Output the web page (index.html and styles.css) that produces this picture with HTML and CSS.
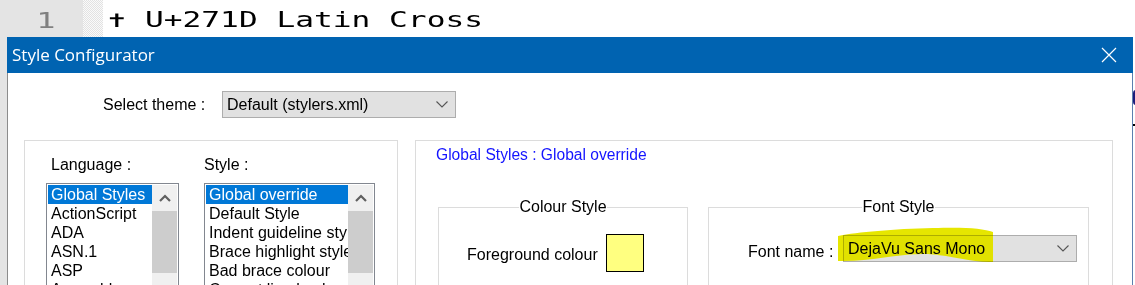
FILE: index.html
```html
<!DOCTYPE html>
<html lang="en">
<head>
<meta charset="utf-8">
<title>Style Configurator</title>
<link rel="stylesheet" href="styles.css">
</head>
<body>
<div class="editor">
  <div class="gutter"><span class="ln">1</span></div>
  <div class="fold"></div>
  <div class="code-col">
    <div class="code"><span class="code-text">✝ U+271D Latin Cross</span></div>
    <div class="behind-glyph"></div>
    <div class="behind-dot"></div>
  </div>
</div>

<div class="dialog">
  <div class="titlebar">
    <span class="title">Style Configurator</span>
    <svg class="close" width="16" height="16" viewBox="0 0 16 16"><path d="M1 1 L15 15 M15 1 L1 15" stroke="#fff" stroke-width="1.2" fill="none"/></svg>
  </div>
  <div class="dlg-body">
    <div class="theme-row">
      <span class="theme-label">Select theme :</span>
      <div class="combo theme-combo">
        <span class="combo-text">Default (stylers.xml)</span>
        <svg class="chev" width="12" height="7" viewBox="0 0 12 7"><path d="M0.5 0.5 L6 6 L11.5 0.5" stroke="#555" stroke-width="1.1" fill="none"/></svg>
      </div>
    </div>

    <div class="groups">
      <div class="group group-left">
        <div class="col col-lang">
          <div class="col-label lang-label">Language :</div>
          <div class="listbox">
            <ul class="items">
              <li class="sel">Global Styles</li>
              <li>ActionScript</li>
              <li>ADA</li>
              <li>ASN.1</li>
              <li>ASP</li>
              <li>Assembly</li>
            </ul>
            <div class="sbar">
              <div class="sbar-up"><svg width="12" height="8" viewBox="0 0 12 8"><path d="M1 7 L6 2 L11 7" stroke="#606060" stroke-width="2.2" fill="none"/></svg></div>
              <div class="sbar-thumb"></div>
            </div>
          </div>
        </div>
        <div class="col col-style">
          <div class="col-label">Style :</div>
          <div class="listbox listbox-style">
            <ul class="items">
              <li class="sel">Global override</li>
              <li>Default Style</li>
              <li>Indent guideline style</li>
              <li>Brace highlight style</li>
              <li>Bad brace colour</li>
              <li>Current line background colour</li>
            </ul>
            <div class="sbar">
              <div class="sbar-up"><svg width="12" height="8" viewBox="0 0 12 8"><path d="M1 7 L6 2 L11 7" stroke="#606060" stroke-width="2.2" fill="none"/></svg></div>
              <div class="sbar-thumb"></div>
            </div>
          </div>
        </div>
      </div>

      <div class="group group-right">
        <div class="heading">Global Styles : Global override</div>
        <div class="sets">
          <fieldset class="set set-colour">
            <legend>Colour Style</legend>
            <div class="colour-row">
              <span class="fg-label">Foreground colour</span>
              <span class="swatch"></span>
            </div>
          </fieldset>
          <fieldset class="set set-font">
            <legend>Font Style</legend>
            <div class="font-row">
              <span class="font-label">Font name :</span>
              <div class="combo font-combo">
                <svg class="marker" width="156" height="38" viewBox="0 0 156 38"><path d="M0 10 C 20 6 55 3 95 2 C 125 1 145 2 155 6 L 155 36 C 135 37 118 30 90 28 C 60 27 35 36 0 35 Z" fill="#e6e600"/></svg>
                <span class="combo-text">DejaVu Sans Mono</span>
                <svg class="chev" width="12" height="7" viewBox="0 0 12 7"><path d="M0.5 0.5 L6 6 L11.5 0.5" stroke="#555" stroke-width="1.1" fill="none"/></svg>
              </div>
            </div>
          </fieldset>
        </div>
      </div>
    </div>
  </div>
</div>
</body>
</html>
```

FILE: styles.css
```css
html, body {
  margin: 0;
  padding: 0;
}

body {
  width: 1135px;
  height: 285px;
  overflow: hidden;
  position: relative;
  background: #ffffff;
  font-family: "Liberation Sans", Arial, sans-serif;
  color: #000;
}

/* ---------- editor behind the dialog ---------- */
.editor {
  display: grid;
  grid-template-columns: 83px 20px 1fr;
  height: 285px;
}

.gutter {
  background: #e4e4e4;
  overflow: hidden;
}

.ln {
  display: inline-block;
  font-family: "DejaVu Sans Mono", monospace;
  font-size: 22px;
  line-height: 41px;
  color: #808080;
  padding-left: 25px;
  transform: scaleX(1.45);
  transform-origin: left center;
}

.fold {
  background-color: #f4f4f4;
  background-image: repeating-conic-gradient(#e2e2e2 0 25%, #fafafa 0 50%);
  background-size: 2px 2px;
}

.code-col {
  position: relative;
  background: #fff;
}

.code {
  height: 37px;
  overflow: visible;
  white-space: nowrap;
}

.code-text {
  display: inline-block;
  font-family: "DejaVu Sans Mono", monospace;
  font-size: 21px;
  line-height: 41px;
  padding-left: 3px;
  transform: scaleX(1.485);
  transform-origin: left center;
}

.behind-glyph {
  position: absolute;
  left: 1030px;
  top: 90px;
  width: 4px;
  height: 15px;
  border-left: 3px solid #1c1c7a;
  border-radius: 3px 0 0 3px;
}

.behind-dot {
  position: absolute;
  left: 1030px;
  top: 124px;
  width: 3px;
  height: 2px;
  background: #000;
}

/* ---------- dialog window ---------- */
.dialog {
  position: absolute;
  left: 7px;
  top: 37px;
  width: 1126px;
  height: 260px;
  display: flex;
  flex-direction: column;
}

.titlebar {
  height: 36px;
  flex: none;
  background: #0063b1;
  display: flex;
  align-items: center;
  justify-content: space-between;
  padding: 0 16px 0 5px;
}

.title {
  font-family: "Open Sans", "Noto Sans", sans-serif;
  font-size: 17px;
  color: #fff;
  line-height: 20px;
}

.close {
  display: block;
}

.dlg-body {
  flex: 1;
  background: #fff;
  border-left: 1px solid #8c8c8c;
  border-right: 1px solid #5b7fae;
  font-size: 16px;
}

.theme-row {
  display: flex;
  align-items: center;
  margin-top: 18px;
  padding-left: 95px;
}

.theme-label {
  width: 119px;
  line-height: 20px;
}

.combo {
  position: relative;
  box-sizing: border-box;
  height: 27px;
  width: 234px;
  background: #e1e1e1;
  border: 1px solid #adadad;
  display: flex;
  align-items: center;
  justify-content: space-between;
  padding: 0 7px 0 4px;
}

.combo-text {
  position: relative;
  line-height: 20px;
  white-space: nowrap;
}

.chev {
  position: relative;
  display: block;
}

/* ---------- group boxes ---------- */
.groups {
  display: flex;
  gap: 17px;
  margin-top: 22px;
  padding-left: 16px;
}

.group {
  box-sizing: border-box;
  height: 160px;
  border: 1px solid #dcdcdc;
  border-bottom: none;
}

.group-left {
  width: 374px;
  display: flex;
  gap: 25px;
  padding: 14px 0 0 21px;
}

.col-label {
  line-height: 20px;
  margin-bottom: 8px;
}

.lang-label {
  padding-left: 5px;
}

.listbox {
  box-sizing: border-box;
  width: 133px;
  height: 110px;
  border: 1px solid #828790;
  border-bottom: none;
  padding: 1px 1px 0 1px;
  display: flex;
}

.listbox-style {
  width: 171px;
}

.items {
  list-style: none;
  margin: 0;
  padding: 0;
  flex: 1;
  overflow: hidden;
}

.items li {
  height: 19px;
  line-height: 19px;
  padding-left: 3px;
  white-space: nowrap;
  overflow: hidden;
}

.items li.sel {
  background: #0078d7;
  color: #fff;
}

.sbar {
  width: 25px;
  flex: none;
  background: #f0f0f0;
  display: flex;
  flex-direction: column;
}

.sbar-up {
  height: 26px;
  display: flex;
  align-items: center;
  justify-content: center;
}

.sbar-up svg {
  display: block;
}

.sbar-thumb {
  height: 62px;
  background: #cdcdcd;
}

/* ---------- right group ---------- */
.group-right {
  width: 698px;
  padding: 4px 0 0 22px;
}

.heading {
  color: #1414ff;
  font-size: 15.6px;
  line-height: 20px;
  margin-left: -2px;
}

.sets {
  display: flex;
  gap: 20px;
  margin-top: 32px;
}

.set {
  box-sizing: border-box;
  margin: 0;
  padding: 0;
  border: 1px solid #dcdcdc;
  border-bottom: none;
  height: 100px;
  min-width: 0;
}

.set legend {
  margin: 0 auto;
  padding: 0;
  line-height: 20px;
}

.set-colour {
  width: 250px;
}

.set-font {
  width: 381px;
}

.colour-row {
  display: flex;
  align-items: center;
  padding: 17px 0 0 28px;
}

.fg-label {
  width: 139px;
  line-height: 20px;
  padding-top: 3px;
}

.swatch {
  box-sizing: border-box;
  width: 38px;
  height: 38px;
  background: #ffff80;
  border: 1px solid #000;
}

.font-row {
  display: flex;
  align-items: center;
  padding: 18px 0 0 39px;
}

.font-label {
  width: 95px;
  line-height: 20px;
  padding-top: 7px;
}

.marker {
  position: absolute;
  left: -6px;
  top: -10px;
  mix-blend-mode: darken;
}
```
